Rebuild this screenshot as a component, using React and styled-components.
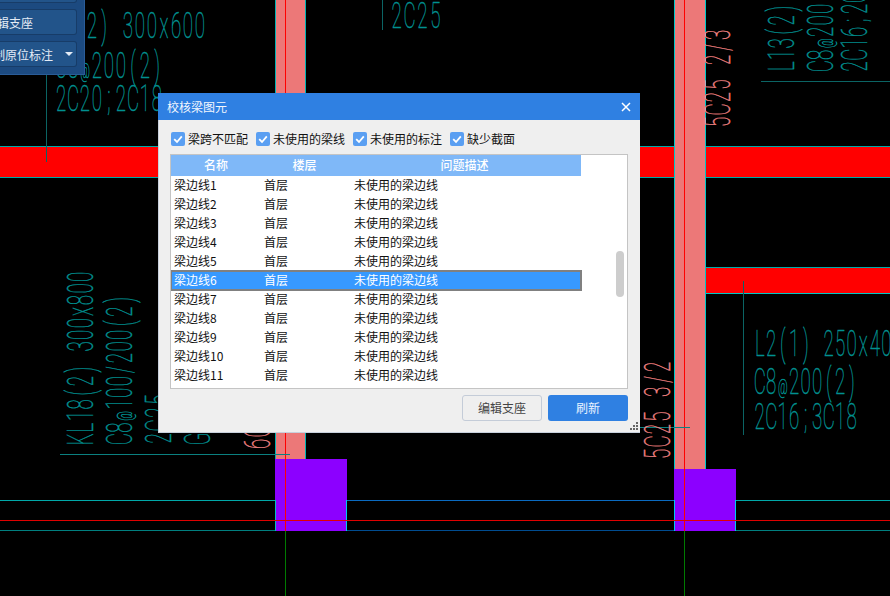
import React from "react";
import styled, { createGlobalStyle } from "styled-components";

const GlobalStyle = createGlobalStyle`
  html, body {
    margin: 0;
    padding: 0;
    background: #000;
    overflow: hidden;
  }
  body {
    font-family: "Noto Sans CJK SC", "Liberation Sans", sans-serif;
    font-size: 12px;
  }
`;

const TEAL = "#009090";
const PINK = "#ee8080";
const SCALE_X = 0.52;

const FILTERS = ["梁跨不匹配", "未使用的梁线", "未使用的标注", "缺少截面"];

const ROWS = Array.from({ length: 11 }, (_, i) => `梁边线${i + 1}`);

// beams and columns of the drawing
const FILLS = [
  { x: 0, y: 147, w: 890, h: 30, c: "#ff0000" },
  { x: 706, y: 268, w: 184, h: 25, c: "#ff0000" },
  { x: 275, y: 0, w: 31, h: 460, c: "#ec7878" },
  { x: 674, y: 0, w: 31, h: 470, c: "#ec7878" },
  { x: 275, y: 459, w: 72, h: 72, c: "#8c00ff" },
  { x: 674, y: 469, w: 62, h: 62, c: "#8c00ff" },
];

const LINES = [
  // beam edges
  [0, 146.5, 275, 146.5, "#00a8a8"],
  [0, 177.5, 275, 177.5, "#00a8a8"],
  [306, 146.5, 674, 146.5, "#00a8a8"],
  [306, 177.5, 674, 177.5, "#00a8a8"],
  [705, 146.5, 890, 146.5, "#00a8a8"],
  [705, 177.5, 890, 177.5, "#00a8a8"],
  [706, 267.5, 890, 267.5, "#00a8a8"],
  [706, 293.5, 890, 293.5, "#00c8c8"],
  // column edges
  [275.5, 0, 275.5, 459, "#00b4b4"],
  [305.5, 0, 305.5, 459, "#00b4b4"],
  [674.5, 0, 674.5, 469, "#00c8c8"],
  [705.5, 0, 705.5, 469, "#00c8c8"],
  // axis lines
  [285.5, 0, 285.5, 531, "#ff0000"],
  [684.5, 0, 684.5, 531, "#ff0000"],
  [285.5, 531, 285.5, 596, "#007a00"],
  [684.5, 531, 684.5, 596, "#007a00"],
  // bottom beam
  [0, 500.5, 275, 500.5, "#00a8a8"],
  [0, 530.5, 275, 530.5, "#007f7f"],
  [275.5, 500, 275.5, 531, "#00c0c0"],
  [347, 500.5, 674, 500.5, "#0a6ac0"],
  [347, 530.5, 674, 530.5, "#004c90"],
  [346.5, 500, 346.5, 531, "#00c8f0"],
  [674.5, 500, 674.5, 531, "#00c8f0"],
  [736, 500.5, 890, 500.5, "#00a8a8"],
  [736, 530.5, 890, 530.5, "#007f7f"],
  [735.5, 500, 735.5, 531, "#00c8f0"],
  [0, 520.5, 890, 520.5, "#e00000"],
  // leader lines
  [46.5, 75, 46.5, 162, "#0b6464"],
  [382.5, 0, 382.5, 30, "#0b6464"],
  [761, 81.5, 890, 81.5, "#0b6464"],
  [743.5, 281, 743.5, 435, "#0b6464"],
  [60, 454.5, 290, 454.5, "#0b8080"],
  [640, 427.5, 690, 427.5, "#0b8080"],
];

const LABELS = [
  { t: "KL2(2) 300x600", x: 38, y: 38, p: 12 },
  { t: "C8@200(2)", x: 55, y: 78, p: 12 },
  { t: "2C20;2C18", x: 55, y: 111, p: 12 },
  { t: "2C25", x: 390, y: 28, p: 13 },
  { t: "L2(1) 250x400", x: 754, y: 356, p: 11.5 },
  { t: "C8@200(2)", x: 754, y: 394, p: 11.5 },
  { t: "2C16;3C18", x: 754, y: 429, p: 11.5 },
  { t: "5C25 2/3", x: 730, y: 128, up: true, c: PINK, p: 12.4 },
  { t: "5C25 3/2", x: 670, y: 460, up: true, c: PINK, p: 12.4 },
  { t: "L13(2)", x: 794, y: 72, up: true, p: 11.5 },
  { t: "C8@200(2)", x: 833, y: 72, up: true, p: 11.5 },
  { t: "2C16;2C18", x: 867, y: 72, up: true, p: 11.5 },
  { t: "KL18(2) 300x800", x: 93, y: 445, up: true, p: 11.6 },
  { t: "C8@100/200(2)", x: 132, y: 445, up: true, p: 11.6 },
  { t: "2C25", x: 171, y: 445, up: true, p: 13 },
  { t: "G2C12", x: 210, y: 445, up: true, p: 12 },
  { t: "6C25 2/4", x: 270, y: 450, up: true, c: PINK, p: 12.4 },
];

function Drawing() {
  return (
    <Canvas viewBox="0 0 890 596">
      {FILLS.map((f, i) => (
        <rect key={i} x={f.x} y={f.y} width={f.w} height={f.h} fill={f.c} />
      ))}
      {LINES.map(([x1, y1, x2, y2, c], i) => (
        <line key={i} x1={x1} y1={y1} x2={x2} y2={y2} stroke={c} strokeWidth="1" />
      ))}
      {LABELS.map((l, i) => (
        <g
          key={i}
          transform={`translate(${l.x} ${l.y}) ${l.up ? "rotate(-90)" : ""} scale(${SCALE_X} 1)`}
        >
          <CadText fill={l.c || TEAL} stroke={l.c || TEAL}>
            {/* cad text is monospaced, so every glyph is centred on its own x */}
            {Array.from(l.t, (ch, k) => (
              <CadGlyph key={k} x={((k + 0.5) * l.p) / SCALE_X} $small={ch === "@"}>
                {ch}
              </CadGlyph>
            ))}
          </CadText>
        </g>
      ))}
    </Canvas>
  );
}

function App() {
  return (
    <Stage>
      <GlobalStyle />
      <Drawing />
      <ToolPanel>
        <ToolButton />
        <ToolButton>
          <ToolText $width={34}>编辑支座</ToolText>
        </ToolButton>
        <ToolButton>
          <ToolText $width={54}>复制原位标注</ToolText>
          <Caret />
        </ToolButton>
      </ToolPanel>
      <Dialog>
        <TitleBar>
          校核梁图元
          <svg width="10" height="10" viewBox="0 0 10 10">
            <path d="M1 1L9 9M9 1L1 9" stroke="#fff" strokeWidth="1.5" />
          </svg>
        </TitleBar>
        <Filters>
          {FILTERS.map((label) => (
            <Filter key={label}>
              <CheckBox>
                <svg width="10" height="10" viewBox="0 0 10 10">
                  <path d="M1.2 5.2L4 8L8.8 2.4" fill="none" stroke="#fff" strokeWidth="1.8" />
                </svg>
              </CheckBox>
              {label}
            </Filter>
          ))}
        </Filters>
        <ListBox>
          <Header>
            <HeadCell $w={90}>名称</HeadCell>
            <HeadCell $w={87}>楼层</HeadCell>
            <HeadCell $w={233}>问题描述</HeadCell>
          </Header>
          {ROWS.map((name, i) => (
            <Row key={name} $selected={i === 5}>
              <Cell $w={90}>{name}</Cell>
              <Cell $w={90}>首层</Cell>
              <Cell $w={230}>未使用的梁边线</Cell>
            </Row>
          ))}
          <ScrollThumb />
        </ListBox>
        <Footer>
          <GhostButton>编辑支座</GhostButton>
          <PrimaryButton>刷新</PrimaryButton>
        </Footer>
        <Grip width="10" height="10" viewBox="0 0 10 10">
          <path d="M7 1h2v2h-2zM4 4h2v2h-2zM7 4h2v2h-2zM1 7h2v2h-2zM4 7h2v2h-2zM7 7h2v2h-2z" fill="#666" />
        </Grip>
      </Dialog>
    </Stage>
  );
}

const Stage = styled.div`
  position: relative;
  width: 890px;
  height: 596px;
  overflow: hidden;
  background: #000;
`;

const Canvas = styled.svg`
  display: block;
  width: 890px;
  height: 596px;
`;

const CadText = styled.text`
  font-family: "Roboto", "Liberation Sans", sans-serif;
  font-size: 36px;
  font-weight: 100;
  text-anchor: middle;
  stroke-width: 0.5px;
`;

const CadGlyph = styled.tspan`
  font-size: ${(p) => (p.$small ? "20px" : "36px")};
`;

const ToolPanel = styled.div`
  position: absolute;
  left: 0;
  top: 0;
  width: 85px;
  height: 75px;
  box-sizing: border-box;
  padding: 0 7px 7px 0;
  display: flex;
  flex-direction: column;
  justify-content: flex-end;
  gap: 6px;
  overflow: hidden;
  background: #1c4a80;
  border-right: 1px solid #2a5c98;
  border-bottom: 1px solid #2a5c98;
`;

const ToolButton = styled.div`
  position: relative;
  flex: none;
  height: 26px;
  box-sizing: border-box;
  border: 1px solid #173c68;
  border-left: none;
  border-radius: 0 3px 3px 0;
  background: #22548a;
  color: #e4ecf6;
  line-height: 25px;
`;

const ToolText = styled.span`
  position: absolute;
  right: ${(p) => 77 - p.$width}px;
  top: 0;
  white-space: nowrap;
`;

const Caret = styled.span`
  position: absolute;
  left: 65px;
  top: 10px;
  border-left: 4px solid transparent;
  border-right: 4px solid transparent;
  border-top: 4px solid #e4ecf6;
`;

const Dialog = styled.div`
  position: absolute;
  left: 158px;
  top: 93px;
  width: 482px;
  height: 340px;
  box-sizing: border-box;
  background: #efefef;
  border: 1px solid #c8d0dc;
  border-top: none;
  border-right: none;
  display: flex;
  flex-direction: column;
`;

const TitleBar = styled.div`
  flex: none;
  height: 27px;
  margin-left: -1px;
  padding: 0 9px;
  display: flex;
  align-items: center;
  justify-content: space-between;
  background: #2f80e2;
  color: #f2f7fe;
`;

const Filters = styled.div`
  flex: none;
  height: 34px;
  box-sizing: border-box;
  padding: 12px 0 0 12px;
  display: flex;
  align-items: flex-start;
  gap: 8px;
`;

const Filter = styled.label`
  display: flex;
  align-items: center;
  gap: 3px;
  color: #111;
  line-height: 14px;
`;

const CheckBox = styled.span`
  width: 14px;
  height: 14px;
  border-radius: 2px;
  background: #5a9ff2;
  display: flex;
  align-items: center;
  justify-content: center;
`;

const ListBox = styled.div`
  position: relative;
  flex: none;
  width: 458px;
  height: 235px;
  margin-left: 11px;
  box-sizing: border-box;
  border: 1px solid #c4c4c4;
  background: #fff;
  overflow: hidden;
`;

const Header = styled.div`
  display: flex;
  width: 410px;
  height: 21px;
  background: #7fb8f8;
`;

const HeadCell = styled.div`
  width: ${(p) => p.$w}px;
  color: #fff;
  font-weight: 500;
  text-align: center;
  line-height: 20px;
`;

const Row = styled.div`
  position: relative;
  display: flex;
  width: 410px;
  height: 19px;
  line-height: 18px;
  color: ${(p) => (p.$selected ? "#fff" : "#111")};
  background: ${(p) => (p.$selected ? "#3799ff" : "transparent")};
  outline: ${(p) => (p.$selected ? "2px solid #808080" : "none")};
  outline-offset: -1px;
`;

const Cell = styled.div`
  width: ${(p) => p.$w}px;
  box-sizing: border-box;
  padding-left: 3px;
`;

const ScrollThumb = styled.div`
  position: absolute;
  left: 445px;
  top: 96px;
  width: 8px;
  height: 46px;
  border-radius: 4px;
  background: #cdcdcd;
`;

const Footer = styled.div`
  flex: none;
  margin-top: 6px;
  padding-right: 12px;
  display: flex;
  justify-content: flex-end;
  gap: 6px;
`;

const GhostButton = styled.div`
  width: 80px;
  height: 26px;
  box-sizing: border-box;
  border: 1px solid #c4ccd8;
  border-radius: 3px;
  color: #444;
  text-align: center;
  line-height: 24px;
`;

const PrimaryButton = styled.div`
  width: 80px;
  height: 26px;
  border-radius: 3px;
  background: #2f80e2;
  color: #eaf3ff;
  text-align: center;
  line-height: 26px;
`;

const Grip = styled.svg`
  position: absolute;
  right: 1px;
  bottom: 1px;
`;

export default App;
